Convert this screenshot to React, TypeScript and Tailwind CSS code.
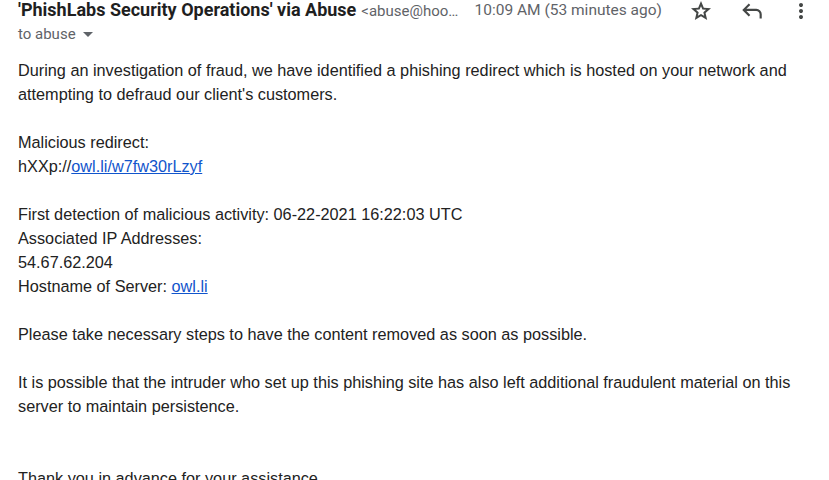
export default function App() {
  const body = "font-['Liberation_Sans',Arial,sans-serif] text-[16.25px] leading-[24px] text-[#222222]";
  const link = 'text-[#1155cc] underline';

  return (
    <div className="w-[829px] h-[480px] overflow-hidden bg-white">
      {/* header */}
      <div className="flex items-start pl-[18px] pr-[16px]">
        <div className="flex-1 min-w-0">
          <div className="flex items-baseline h-[20px] whitespace-nowrap">
            <span className="font-['Roboto',Arial,sans-serif] text-[18px] font-bold text-[#1f1f1f] leading-[20px]">
              'PhishLabs Security Operations' via Abuse
            </span>
            <span className="ml-[5px] font-['Roboto',Arial,sans-serif] text-[15px] text-[#5f6368]">
              &lt;abuse@hoo…
            </span>
          </div>
          <div className="flex items-center mt-[4px] h-[20px] font-['Roboto',Arial,sans-serif] text-[15px] text-[#5f6368]">
            <span>to abuse</span>
            <svg width="10" height="5" viewBox="0 0 10 5" className="ml-[7px] mt-[1px]">
              <path d="M0 0 L10 0 L5 5 Z" fill="#5f6368" />
            </svg>
          </div>
        </div>
        <div className="flex items-center h-[22px] font-['Roboto',Arial,sans-serif] text-[15.5px] text-[#5f6368] whitespace-nowrap">
          <span className="mr-[27px]">10:09 AM (53 minutes ago)</span>
          <svg width="24" height="24" viewBox="0 -960 960 960" className="mr-[26px]">
            <path
              fill="#444746"
              d="m354-287 126-76 126 77-33-144 111-96-146-13-58-136-58 135-146 13 111 97-33 143ZM233-120l65-281L80-590l288-25 112-265 112 265 288 25-218 189 65 281-247-149-247 149Z"
            />
          </svg>
          <svg width="26" height="26" viewBox="0 -960 960 960" className="mr-[24px]">
            <path
              fill="#444746"
              d="M760-200v-160q0-50-35-85t-85-35H273l144 144-57 56-240-240 240-240 57 56-144 144h367q83 0 141.5 58.5T840-360v160h-80Z"
            />
          </svg>
          <svg width="24" height="24" viewBox="0 -960 960 960">
            <path
              fill="#444746"
              d="M480-160q-33 0-56.5-23.5T400-240q0-33 23.5-56.5T480-320q33 0 56.5 23.5T560-240q0 33-23.5 56.5T480-160Zm0-240q-33 0-56.5-23.5T400-480q0-33 23.5-56.5T480-560q33 0 56.5 23.5T560-480q0 33-23.5 56.5T480-400Zm0-240q-33 0-56.5-23.5T400-720q0-33 23.5-56.5T480-800q33 0 56.5 23.5T560-720q0 33-23.5 56.5T480-640Z"
            />
          </svg>
        </div>
      </div>

      {/* body */}
      <div className={`${body} pl-[18px] pr-[20px] mt-[14px]`}>
        <p>
          During an investigation of fraud, we have identified a phishing redirect which is hosted on your network and
          attempting to defraud our client's customers.
        </p>
        <p className="mt-[24px]">Malicious redirect:</p>
        <p>
          hXXp://<a className={link}>owl.li/w7fw30rLzyf</a>
        </p>
        <p className="mt-[24px]">First detection of malicious activity: 06-22-2021 16:22:03 UTC</p>
        <p>Associated IP Addresses:</p>
        <p>54.67.62.204</p>
        <p>
          Hostname of Server: <a className={link}>owl.li</a>
        </p>
        <p className="mt-[24px]">Please take necessary steps to have the content removed as soon as possible.</p>
        <p className="mt-[24px]">
          It is possible that the intruder who set up this phishing site has also left additional fraudulent material on this
          server to maintain persistence.
        </p>
        <p className="mt-[48px]">Thank you in advance for your assistance.</p>
      </div>
    </div>
  );
}
